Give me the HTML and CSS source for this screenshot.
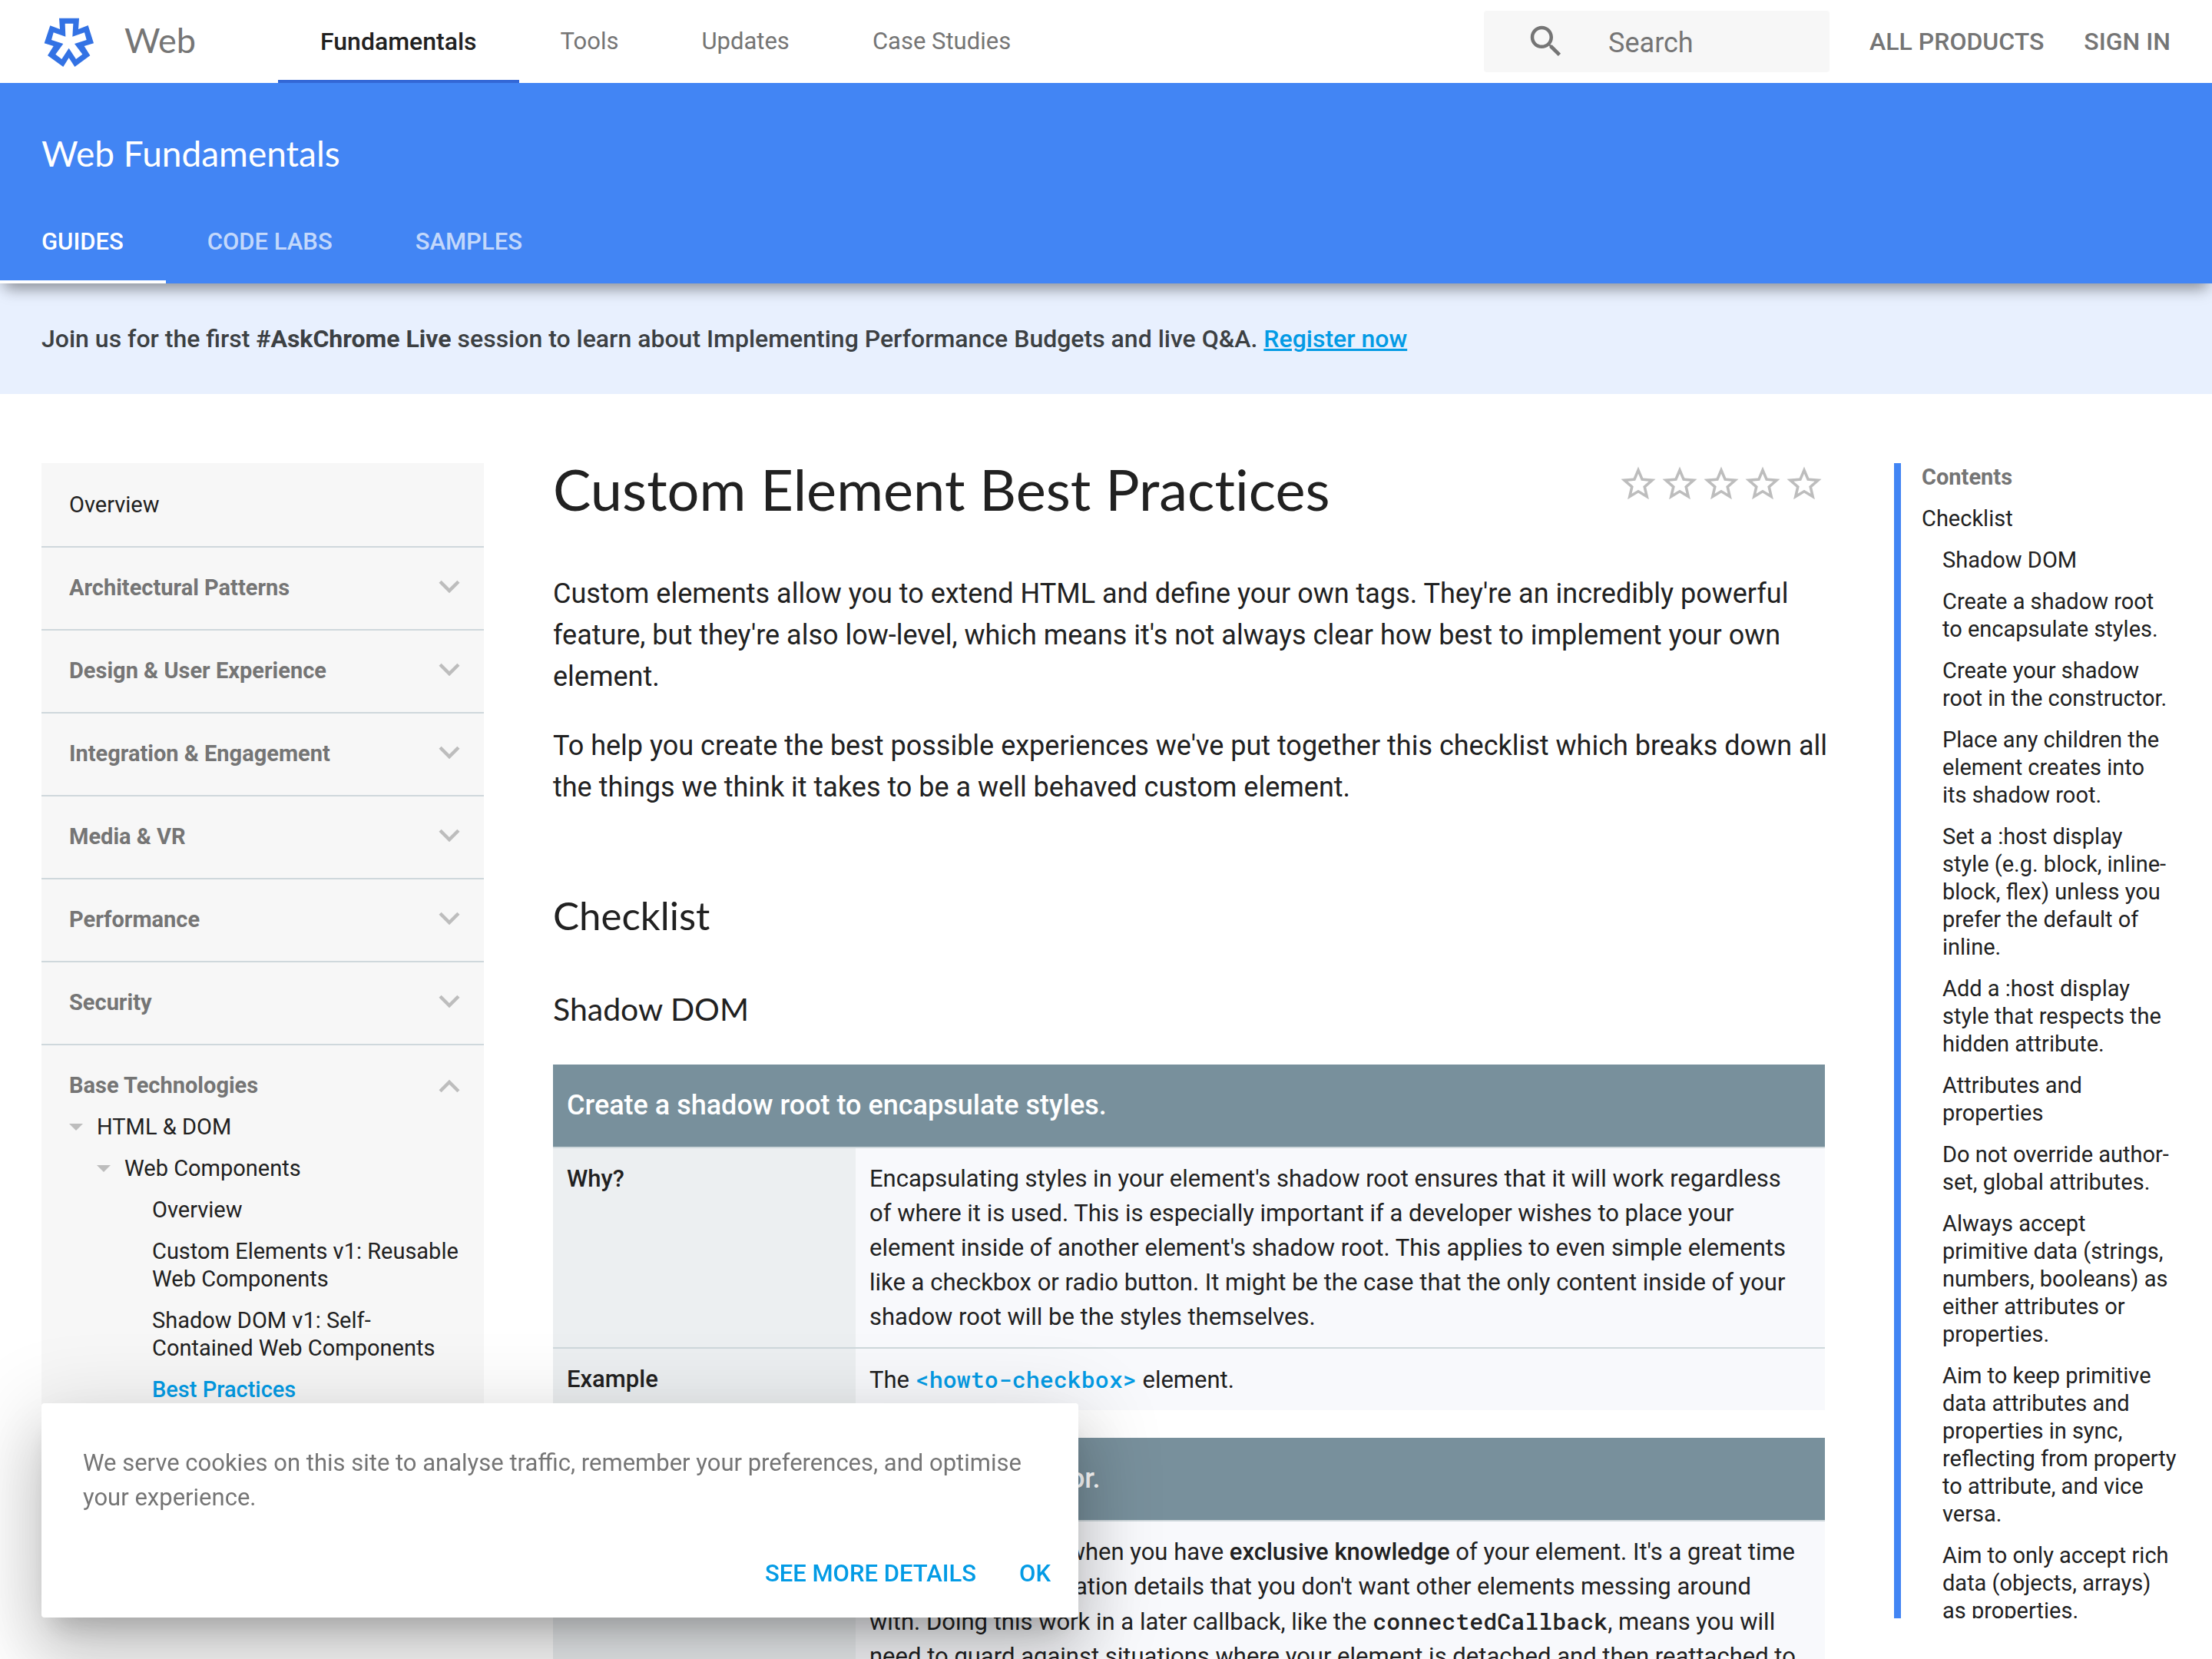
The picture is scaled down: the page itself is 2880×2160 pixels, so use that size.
FILE: index.html
```html
<!DOCTYPE html>
<html lang="en">
<head>
<meta charset="utf-8">
<title>Custom Element Best Practices | Web Fundamentals</title>
<link rel="stylesheet" href="styles.css">
</head>
<body>
<svg class="defs" aria-hidden="true">
  <symbol id="i-chevron" viewBox="0 0 24 24"><path d="M7.41 7.84L12 12.42l4.59-4.58L18 9.25l-6 6-6-6z"/></symbol>
  <symbol id="i-star" viewBox="0 0 24 24"><path d="M22 9.24l-7.19-.62L12 2 9.19 8.63 2 9.24l5.46 4.73L5.82 21 12 17.27 18.18 21l-1.63-7.03L22 9.24zM12 15.4l-3.76 2.27 1-4.28-3.32-2.88 4.38-.38L12 6.1l1.71 4.04 4.38.38-3.32 2.88 1 4.28L12 15.4z"/></symbol>
</svg>

<header class="site-header">
  <div class="top-bar">
    <a class="brand" href="#">
      <svg class="logo" viewBox="42 24 216 216" aria-hidden="true"><path fill-rule="evenodd" d="M111 41H189L186 84L224 69L246 139L209 150L232 187L172 231L149 196L127 231L66 187L89 150L53 139L76 70L114 84ZM134 62L136 113L89 97L81 126L127 141L97 182L121 201L149 158L177 201L202 182L171 141L218 126L210 97L163 113L166 62Z"/></svg>
      <span>Web</span>
    </a>
    <nav class="main-nav" aria-label="Main">
      <a class="active" href="#">Fundamentals</a>
      <a href="#">Tools</a>
      <a href="#">Updates</a>
      <a href="#">Case Studies</a>
    </nav>
    <form class="search">
      <label for="q"><svg viewBox="0 0 24 24" role="img" aria-label="Search"><path d="M15.5 14h-.79l-.28-.27C15.41 12.59 16 11.11 16 9.5 16 5.91 13.09 3 9.5 3S3 5.91 3 9.5 5.91 16 9.5 16c1.61 0 3.09-.59 4.23-1.57l.27.28v.79l5 4.99L20.49 19l-4.99-5zm-6 0C7.01 14 5 11.99 5 9.5S7.01 5 9.5 5 14 7.01 14 9.5 11.99 14 9.5 14z"/></svg></label>
      <input id="q" type="text" placeholder="Search">
    </form>
    <nav class="user-nav" aria-label="Account">
      <a href="#">ALL PRODUCTS</a>
      <a href="#">SIGN IN</a>
    </nav>
  </div>
  <div class="product-bar">
    <a class="product-name" href="#">Web Fundamentals</a>
    <nav class="tabs" aria-label="Section">
      <a class="active" href="#">GUIDES</a>
      <a href="#">CODE LABS</a>
      <a href="#">SAMPLES</a>
    </nav>
  </div>
</header>

<div class="banner">Join us for the first <strong>#AskChrome Live</strong> session to learn about Implementing Performance Budgets and live Q&amp;A. <a href="#">Register now</a></div>

<div class="layout">
  <nav class="sidebar" aria-label="Guides">
    <div class="section"><a class="plain" href="#">Overview</a></div>
    <div class="section"><button type="button">Architectural Patterns<svg><use href="#i-chevron"/></svg></button></div>
    <div class="section"><button type="button">Design &amp; User Experience<svg><use href="#i-chevron"/></svg></button></div>
    <div class="section"><button type="button">Integration &amp; Engagement<svg><use href="#i-chevron"/></svg></button></div>
    <div class="section"><button type="button">Media &amp; VR<svg><use href="#i-chevron"/></svg></button></div>
    <div class="section"><button type="button">Performance<svg><use href="#i-chevron"/></svg></button></div>
    <div class="section"><button type="button">Security<svg><use href="#i-chevron"/></svg></button></div>
    <div class="section open">
      <button type="button" aria-expanded="true">Base Technologies<svg><use href="#i-chevron"/></svg></button>
      <ul class="tree">
        <li><a class="branch" href="#">HTML &amp; DOM</a>
          <ul>
            <li><a class="branch" href="#">Web Components</a>
              <ul>
                <li><a href="#">Overview</a></li>
                <li><a href="#">Custom Elements v1: Reusable Web Components</a></li>
                <li><a href="#">Shadow DOM v1: Self-Contained Web Components</a></li>
                <li><a class="current" href="#">Best Practices</a></li>
              </ul>
            </li>
          </ul>
        </li>
      </ul>
    </div>
  </nav>

  <main class="article">
    <div class="title-row">
      <h1>Custom Element Best Practices</h1>
      <div class="rating">
        <button type="button" aria-label="1 star"><svg><use href="#i-star"/></svg></button>
        <button type="button" aria-label="2 stars"><svg><use href="#i-star"/></svg></button>
        <button type="button" aria-label="3 stars"><svg><use href="#i-star"/></svg></button>
        <button type="button" aria-label="4 stars"><svg><use href="#i-star"/></svg></button>
        <button type="button" aria-label="5 stars"><svg><use href="#i-star"/></svg></button>
      </div>
    </div>
    <p>Custom elements allow you to extend HTML and define your own tags. They're an incredibly powerful feature, but they're also low-level, which means it's not always clear how best to implement your own element.</p>
    <p>To help you create the best possible experiences we've put together this checklist which breaks down all the things we think it takes to be a well behaved custom element.</p>
    <h2>Checklist</h2>
    <h3>Shadow DOM</h3>
    <table>
      <colgroup><col class="label-col"><col></colgroup>
      <thead><tr><th colspan="2">Create a shadow root to encapsulate styles.</th></tr></thead>
      <tbody>
        <tr><th scope="row">Why?</th><td>Encapsulating styles in your element's shadow root ensures that it will work regardless of where it is used. This is especially important if a developer wishes to place your element inside of another element's shadow root. This applies to even simple elements like a checkbox or radio button. It might be the case that the only content inside of your shadow root will be the styles themselves.</td></tr>
        <tr><th scope="row">Example</th><td>The <a href="#"><code>&lt;howto-checkbox&gt;</code></a> element.</td></tr>
      </tbody>
    </table>
    <table>
      <colgroup><col class="label-col"><col></colgroup>
      <thead><tr><th colspan="2">Create your shadow root in the constructor.</th></tr></thead>
      <tbody>
        <tr><th scope="row">Why?</th><td>The constructor is when you have <strong>exclusive knowledge</strong> of your element. It's a great time to setup implementation details that you don't want other elements messing around with. Doing this work in a later callback, like the <code>connectedCallback</code>, means you will need to guard against situations where your element is detached and then reattached to the document.</td></tr>
      </tbody>
    </table>
  </main>

  <nav class="toc" aria-label="Contents">
    <div class="toc-title">Contents</div>
    <a href="#">Checklist</a>
    <ul>
      <li><a href="#">Shadow DOM</a></li>
      <li><a href="#">Create a shadow root to encapsulate styles.</a></li>
      <li><a href="#">Create your shadow root in the constructor.</a></li>
      <li><a href="#">Place any children the element creates into its shadow root.</a></li>
      <li><a href="#">Set a :host display style (e.g. block, inline-block, flex) unless you prefer the default of inline.</a></li>
      <li><a href="#">Add a :host display style that respects the hidden attribute.</a></li>
      <li><a href="#">Attributes and properties</a></li>
      <li><a href="#">Do not override author-set, global attributes.</a></li>
      <li><a href="#">Always accept primitive data (strings, numbers, booleans) as either attributes or properties.</a></li>
      <li><a href="#">Aim to keep primitive data attributes and properties in sync, <span class="keep">reflecting from property</span> to attribute, and vice versa.</a></li>
      <li><a href="#">Aim to only accept rich data (objects, arrays) as properties.</a></li>
    </ul>
  </nav>
</div>

<div class="cookies" role="dialog" aria-label="Cookies">
  <p>We serve cookies on this site to analyse traffic, remember your preferences, and optimise your experience.</p>
  <div class="actions">
    <a href="#">SEE MORE DETAILS</a>
    <button type="button">OK</button>
  </div>
</div>
</body>
</html>
```

FILE: styles.css
```css
* { box-sizing: border-box; }
html { height: 100%; }
body {
  margin: 0;
  height: 100vh;
  overflow: hidden;
  display: flex;
  flex-direction: column;
  background: #fff;
  color: #212121;
  font: 36px/54px Roboto, "Noto Sans", sans-serif;
}
a { color: inherit; text-decoration: none; }
button { border: 0; padding: 0; background: none; font: inherit; color: inherit; text-align: left; }
ul { list-style: none; margin: 0; padding: 0; }
svg { display: block; fill: currentColor; }
.defs { display: none; }

.site-header {
  position: relative;
  z-index: 2;
  flex: none;
  box-shadow: 0 14px 18px -7px rgba(0, 0, 0, .34), 0 2px 22px rgba(0, 0, 0, .12);
}
.top-bar { display: flex; align-items: center; height: 108px; padding-right: 54px; background: #fff; color: #757575; }
.brand { display: flex; align-items: center; gap: 36px; width: 362px; padding-left: 54px; font: 45px/72px Lato, sans-serif; }
.brand span { padding-bottom: 4px; }
.logo { width: 72px; height: 72px; flex: none; fill: #3372e4; }
.main-nav { display: flex; align-self: stretch; font-size: 31px; }
.main-nav a { display: flex; align-items: center; padding: 0 54px; border-bottom: 4px solid transparent; border-top: 4px solid transparent; }
.main-nav .active { padding: 0 55px; color: #212121; font-size: 32px; font-weight: 500; border-bottom-color: #3367d6; }
.search { display: flex; align-items: center; width: 450px; height: 80px; margin-left: auto; padding-left: 54px; gap: 54px; background: #f7f7f7; border-radius: 4px; }
.search svg { width: 54px; height: 54px; }
.search input { flex: 1; min-width: 0; border: 0; padding: 4px 0 0; background: none; font: inherit; color: #757575; }
.search input::placeholder { color: #757575; opacity: 1; }
.user-nav { display: flex; gap: 52px; margin-left: 52px; font-size: 32px; font-weight: 500; }

.product-bar { background: #4285f4; color: #fff; }
.product-name { display: block; padding: 56px 54px 0; height: 153px; font: 46px/72px Lato, sans-serif; }
.tabs { display: flex; height: 108px; font-size: 31px; font-weight: 500; }
.tabs a { display: flex; align-items: center; padding: 0 54px; border-bottom: 4px solid transparent; border-top: 4px solid transparent; color: rgba(255, 255, 255, .7); }
.tabs .active { padding-right: 55px; color: #fff; border-bottom-color: #fff; }

.banner { flex: none; padding: 45px 54px; background: #e8f0fe; color: #3c4043; font-size: 32px; font-weight: 500; }
.banner strong { font-weight: 700; }
.banner a { color: #039be5; text-decoration: underline; }

.layout { flex: 1; min-height: 0; display: grid; grid-template-columns: 576px minmax(0, 1fr) 360px; gap: 90px; padding: 90px 54px 0; align-items: start; }

.sidebar { background: #f7f7f7; color: #757575; font-size: 29px; line-height: 36px; }
.section { min-height: 108px; padding: 36px 27px 36px 36px; }
.section + .section { border-top: 2px solid #cfd8dc; padding-top: 34px; }
.section .plain { color: #212121; }
.section button { display: flex; justify-content: space-between; align-items: center; width: 100%; height: 36px; font-weight: 700; }
.section svg { width: 54px; height: 54px; margin-right: -9px; color: #bdbdbd; }
.section.open svg { transform: rotate(180deg); }
.tree { color: #212121; }
.tree li { padding: 18px 0 0 36px; }
.tree a { display: block; position: relative; }
.tree .branch::before { content: ""; position: absolute; left: -36px; top: 14px; border: 9px solid transparent; border-top-color: #bdbdbd; border-bottom: 0; }
.tree .current { color: #039be5; font-weight: 500; }

.title-row { display: flex; justify-content: space-between; align-items: flex-start; }
h1 { margin: 0; font: 74px/68px Lato, sans-serif; font-variant-ligatures: none; }
.rating { display: flex; color: #bdbdbd; }
.rating svg { width: 54px; height: 54px; }
.article p { margin: 36px -18px 36px 0; }
.article .title-row + p { margin-top: 75px; }
h2 { margin: 104px 0 59px; font: 51px/72px Lato, sans-serif; }
h3 { margin: 0 0 45px; font: 41px/54px Lato, sans-serif; }
table { width: 100%; margin-bottom: 36px; border-collapse: collapse; table-layout: fixed; font-size: 31px; line-height: 45px; }
.label-col { width: 394px; }
thead th { height: 108px; padding: 0 18px; background: #78909c; color: #fff; font-size: 36px; font-weight: 500; text-align: left; }
tbody th { background: #eceff1; font-weight: 500; text-align: left; }
tbody tr { border-top: 2px solid #cfd8dc; }
tbody th, tbody td { padding: 17px 18px; vertical-align: top; }
tbody td { padding-right: 27px; background: #f8f9fc; }
td a { color: #039be5; }
td strong { font-weight: 500; }
code { font: 500 30px/45px "Roboto Mono", "Liberation Mono", monospace; }

.toc { height: 1504px; margin-right: -9px; overflow: hidden; padding-left: 27px; border-left: 9px solid #4285f4; font-size: 29px; line-height: 36px; }
.toc-title { color: #757575; font-weight: 700; }
.toc a { display: block; margin-top: 18px; }
.toc ul { padding: 0 9px 0 27px; }
.toc .keep { white-space: nowrap; }

.cookies {
  position: fixed;
  z-index: 3;
  left: 54px;
  bottom: 54px;
  width: 1350px;
  padding: 55px 36px 26px 54px;
  background: #fff;
  border-radius: 4px;
  box-shadow: 0 54px 86px 7px rgba(0, 0, 0, .14), 0 20px 104px 18px rgba(0, 0, 0, .12), 0 25px 34px -16px rgba(0, 0, 0, .2);
  color: #757575;
  font-size: 31px;
  line-height: 45px;
}
.cookies p { margin: 0 0 45px; }
.actions { display: flex; justify-content: flex-end; gap: 56px; line-height: 63px; color: #039be5; font-weight: 500; }
```
